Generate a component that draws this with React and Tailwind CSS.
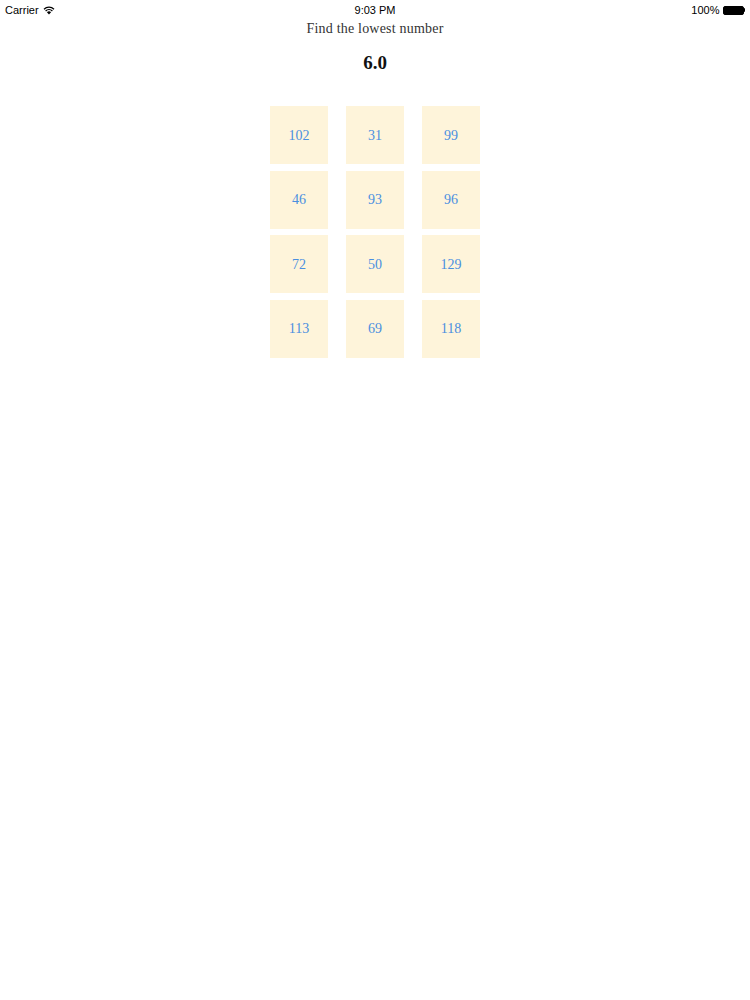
import React from 'react'

const numbers = [102, 31, 99, 46, 93, 96, 72, 50, 129, 113, 69, 118]

const Wifi = () => (
    <svg width="12" height="9" viewBox="0 0 12 9" className="ml-[4px]">
        <path d="M6 8.6 L3.9 6.3 A3 3 0 0 1 8.1 6.3 Z" fill="#000" />
        <path d="M2.6 5 A4.9 4.9 0 0 1 9.4 5" stroke="#000" strokeWidth="1.3" fill="none" />
        <path d="M1 3.2 A7.2 7.2 0 0 1 11 3.2" stroke="#000" strokeWidth="1.3" fill="none" />
    </svg>
)

const Battery = () => (
    <div className="ml-[3px] flex items-center">
        <div className="h-[9px] w-[21px] rounded-[2px] border border-black bg-black" />
        <div className="h-[4px] w-[1.5px] rounded-r-sm bg-black" />
    </div>
)

const StatusBar = () => (
    <div className="flex h-[20px] items-center justify-between px-[5px] font-['Liberation_Sans',sans-serif] text-[11px] text-black">
        <div className="flex w-[120px] items-center">
            Carrier
            <Wifi />
        </div>
        <div className="font-medium">9:03 PM</div>
        <div className="flex w-[120px] items-center justify-end">
            100%
            <Battery />
        </div>
    </div>
)

export default function App() {
    return (
        <div className="min-h-[1000px] w-full bg-white">
            <StatusBar />
            <div className="flex flex-col items-center font-['Liberation_Serif',serif]">
                <h1 className="mt-[1px] text-[14px] leading-[16px] tracking-[0.2px] text-[#333]">
                    Find the lowest number
                </h1>
                <div className="mt-[15px] text-[19px] font-bold leading-[22px] text-[#111]">
                    6.0
                </div>
                <div className="mt-[32px] grid grid-cols-[58px_58px_58px] gap-x-[18px] gap-y-[6.5px]">
                    {numbers.map((n) => (
                        <div
                            key={n}
                            className="flex h-[58px] w-[58px] items-center justify-center bg-[#fef4da] text-[14px] text-[#4a8fe0]">
                            {n}
                        </div>
                    ))}
                </div>
            </div>
        </div>
    )
}
